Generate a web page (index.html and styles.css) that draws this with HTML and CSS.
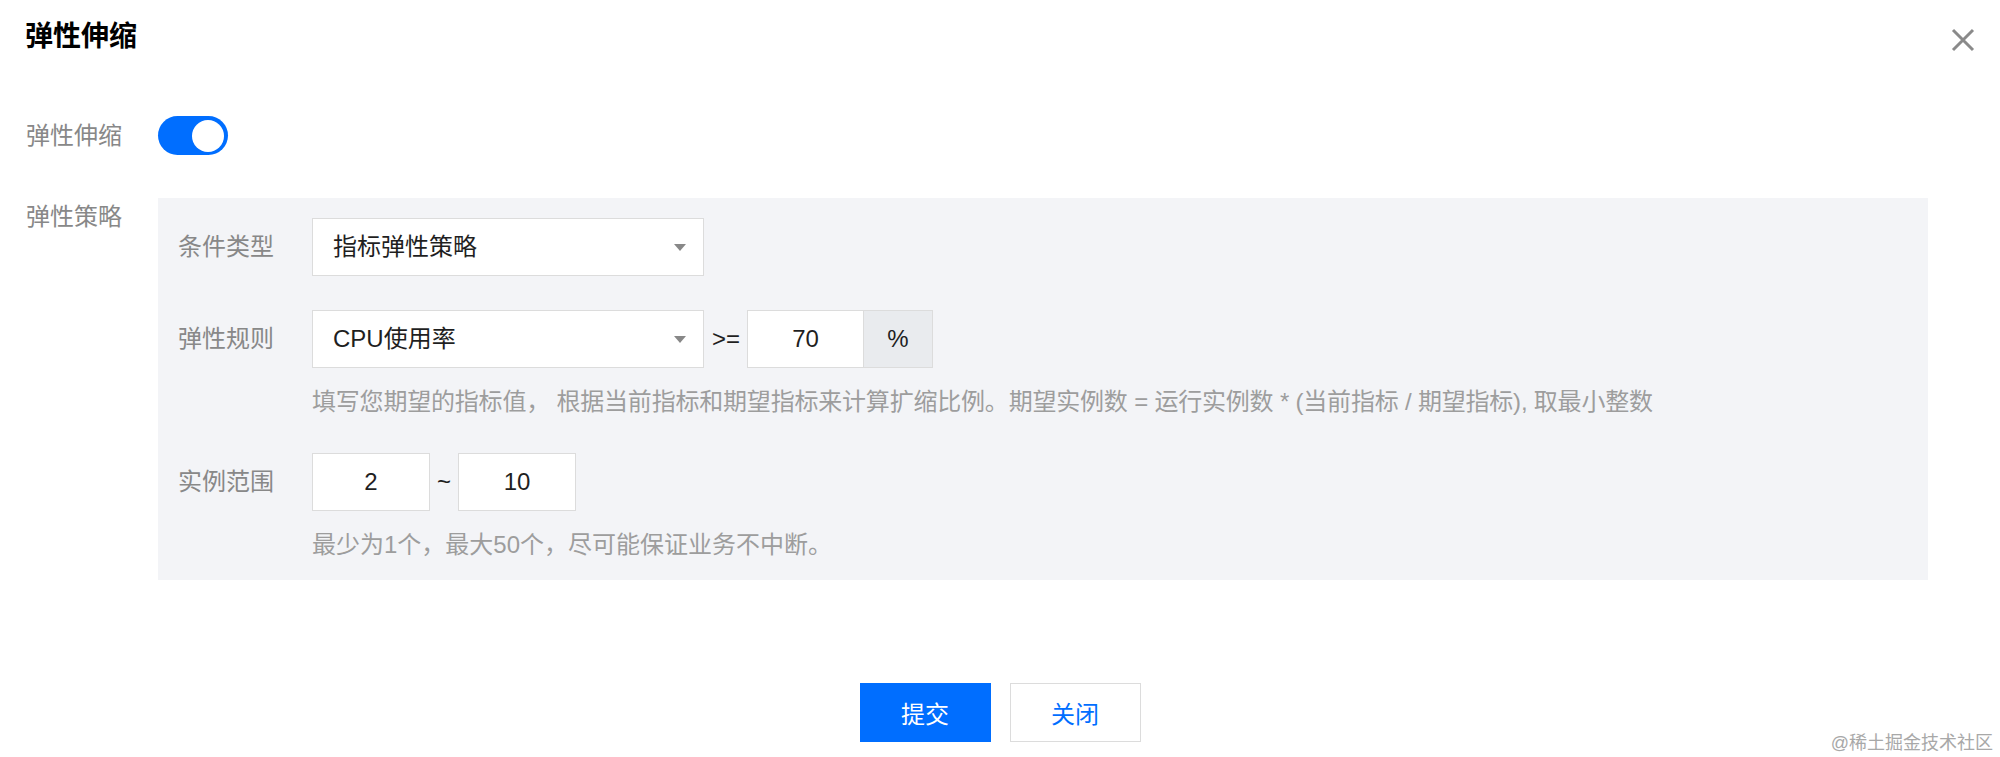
FILE: index.html
```html
<!DOCTYPE html>
<html lang="zh-CN">
<head>
  <meta charset="UTF-8" />
  <meta name="viewport" content="width=device-width, initial-scale=1" />
  <title>弹性伸缩</title>
  <link rel="stylesheet" href="styles.css">
</head>
<body>
  <div class="dialog">
    <div class="dialog-header">
      <h2 class="dialog-title">弹性伸缩</h2>
      <button class="close-btn" aria-label="关闭">
        <svg width="24" height="24" viewBox="0 0 24 24">
          <path d="M2 2 L22 22 M22 2 L2 22" stroke="#8a8a8a" stroke-width="3" fill="none" />
        </svg>
      </button>
    </div>

    <div class="form">
      <div class="form-row">
        <div class="form-label toggle-label">弹性伸缩</div>
        <div class="switch is-on"></div>
      </div>

      <div class="form-row policy-row">
        <div class="form-label policy-label">弹性策略</div>
        <div class="policy-panel">
          <div class="item">
            <div class="item-label">条件类型</div>
            <div class="item-ctrl">
              <div class="select">指标弹性策略</div>
            </div>
          </div>

          <div class="item">
            <div class="item-label">弹性规则</div>
            <div class="item-ctrl">
              <div class="ctrl-line">
                <div class="select">CPU使用率</div>
                <span class="op">&gt;=</span>
                <div class="input-group">
                  <input class="num-input target-input" type="text" value="70" />
                  <span class="addon">%</span>
                </div>
              </div>
              <div class="help help-long">填写您期望的指标值， 根据当前指标和期望指标来计算扩缩比例。期望实例数 = 运行实例数 * (当前指标 / 期望指标), 取最小整数</div>
            </div>
          </div>

          <div class="item">
            <div class="item-label">实例范围</div>
            <div class="item-ctrl">
              <div class="ctrl-line">
                <input class="num-input range-input" type="text" value="2" />
                <span class="tilde">~</span>
                <input class="num-input range-input" type="text" value="10" />
              </div>
              <div class="help">最少为1个，最大50个，尽可能保证业务不中断。</div>
            </div>
          </div>
        </div>
      </div>
    </div>

    <div class="dialog-footer">
      <button class="btn btn-primary">提交</button>
      <button class="btn btn-default">关闭</button>
    </div>
  </div>

  <div class="watermark">@稀土掘金技术社区</div>
</body>
</html>
```

FILE: styles.css
```css
:root {
  --blue: #006eff;
  --panel: #f3f4f7;
  --border: #dcdcdc;
  --label: #888;
  --help: #9d9d9d;
  --text: #1f1f1f;
}

body {
  margin: 0;
  width: 2000px;
  height: 757px;
  overflow: hidden;
  background: #fff;
  font-family: "Liberation Sans", "Noto Sans CJK SC", sans-serif;
  font-size: 24px;
  color: var(--text);
  position: relative;
}

.dialog-header {
  display: flex;
  align-items: center;
  justify-content: space-between;
  height: 74px;
  padding: 0 25px;
}

.dialog-title {
  margin: 0;
  font-size: 28px;
  font-weight: bold;
  color: #000;
  line-height: 74px;
}

.close-btn {
  border: none;
  background: none;
  padding: 0;
  width: 24px;
  height: 24px;
  margin-top: 6px;
  cursor: pointer;
}

.close-btn svg {
  display: block;
}

.form {
  padding: 42px 0 0 26px;
}

.form-row {
  display: flex;
}

.form-label {
  width: 132px;
  color: var(--label);
}

.toggle-label {
  line-height: 39px;
}

.switch {
  position: relative;
  width: 70px;
  height: 39px;
  border-radius: 20px;
  background: #ccc;
  cursor: pointer;
}

.switch.is-on {
  background: var(--blue);
}

.switch::after {
  content: "";
  position: absolute;
  top: 3.5px;
  left: 4px;
  width: 32px;
  height: 32px;
  border-radius: 50%;
  background: #fff;
}

.switch.is-on::after {
  left: auto;
  right: 4px;
}

.policy-row {
  margin-top: 43px;
}

.policy-label {
  line-height: 38px;
}

.policy-panel {
  width: 1770px;
  box-sizing: border-box;
  padding: 20px 20px 18px;
  background: var(--panel);
}

.item {
  display: flex;
}

.item + .item {
  margin-top: 34px;
}

.item-label {
  width: 134px;
  height: 58px;
  line-height: 58px;
  color: var(--label);
}

.ctrl-line {
  display: flex;
  align-items: center;
}

.select {
  position: relative;
  width: 392px;
  height: 58px;
  box-sizing: border-box;
  border: 1px solid var(--border);
  background: #fff;
  padding-left: 20px;
  line-height: 56px;
  color: var(--text);
}

.select::after {
  content: "";
  position: absolute;
  right: 17px;
  top: 25px;
  border-left: 6.5px solid transparent;
  border-right: 6.5px solid transparent;
  border-top: 7px solid #888;
}

.op {
  margin: 0 7px 0 8px;
  color: var(--text);
}

.input-group {
  display: flex;
  height: 58px;
  border: 1px solid var(--border);
  box-sizing: border-box;
}

.num-input {
  font: inherit;
  color: var(--text);
  text-align: center;
  box-sizing: border-box;
  height: 58px;
  background: #fff;
  outline: none;
  padding: 0;
}

.target-input {
  width: 115px;
  height: 56px;
  border: none;
}

.addon {
  width: 68px;
  line-height: 56px;
  text-align: center;
  background: #e9ebee;
  border-left: 1px solid var(--border);
}

.range-input {
  width: 118px;
  border: 1px solid var(--border);
}

.tilde {
  width: 28px;
  text-align: center;
}

.help {
  margin-top: 17px;
  line-height: 34px;
  color: var(--help);
  white-space: nowrap;
}

.help-long {
  letter-spacing: -0.2px;
}

.dialog-footer {
  display: flex;
  justify-content: center;
  gap: 19px;
  margin-top: 103px;
}

.btn {
  width: 131px;
  height: 59px;
  font: inherit;
  cursor: pointer;
  border: 1px solid var(--border);
}

.btn-primary {
  background: var(--blue);
  border-color: var(--blue);
  color: #fff;
}

.btn-default {
  background: #fff;
  color: var(--blue);
}

.watermark {
  position: absolute;
  right: 7px;
  bottom: 3px;
  font-size: 18px;
  color: #a8a8a8;
}
```
